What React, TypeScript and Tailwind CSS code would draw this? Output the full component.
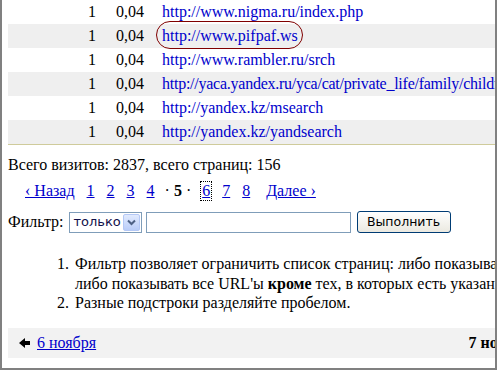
import React from "react";

const rows = [
  "http://www.nigma.ru/index.php",
  "http://www.pifpaf.ws",
  "http://www.rambler.ru/srch",
  "http://yaca.yandex.ru/yca/cat/private_life/family/children/kindergarten/",
  "http://yandex.kz/msearch",
  "http://yandex.kz/yandsearch",
];

const serif = { fontFamily: '"Liberation Serif", "Times New Roman", serif' };
const sans = { fontFamily: '"DejaVu Sans", Tahoma, sans-serif' };

export default function App() {
  return (
    <div
      className="w-[497px] h-[370px] overflow-hidden border-l-2 border-r-2 border-b-2 border-[#808080] bg-white text-[16px] text-black"
      style={serif}
    >
      <div className="w-[990px] pl-[6px] flex flex-col">
        {/* table */}
        <div className="flex flex-col border-b border-[#cfcb9b]">
          {rows.map((u, i) => (
            <div
              key={u}
              className={`flex items-center h-[24px] leading-[18px] whitespace-nowrap ${
                i % 2 === 1 ? "bg-[#efefef]" : "bg-white"
              }`}
            >
              <span className="w-[88px] text-right">1</span>
              <span className="ml-[20px] w-[28px]">0,04</span>
              <span className="ml-[18px] relative">
                <a
                  href="#"
                  className={`text-[#0000cc] ${i === 3 ? "tracking-[-0.25px]" : ""}`}
                >
                  {u}
                </a>
                {i === 1 && (
                  <span className="absolute left-[-6px] right-[-5px] top-[-6px] bottom-[-4px] rounded-full border-[1.5px] border-[#800000] pointer-events-none" />
                )}
              </span>
            </div>
          ))}
        </div>

        {/* stats */}
        <div className="mt-[11px] leading-[18px] whitespace-nowrap">
          Всего визитов: 2837, всего страниц: 156
        </div>

        {/* pagination */}
        <div className="mt-[8px] flex items-baseline leading-[18px] whitespace-nowrap">
          <a href="#" className="ml-[17px] text-[#0000cc] underline">
            ‹ Назад
          </a>
          <a href="#" className="ml-[12px] text-[#0000cc] underline">1</a>
          <a href="#" className="ml-[12px] text-[#0000cc] underline">2</a>
          <a href="#" className="ml-[12px] text-[#0000cc] underline">3</a>
          <a href="#" className="ml-[12px] text-[#0000cc] underline">4</a>
          <span className="ml-[10px]">
            ·&nbsp;<b>5</b>&nbsp;·
          </span>
          <a
            href="#"
            className="ml-[10px] px-[1px] text-[#0000cc] underline outline outline-1 outline-dotted outline-black"
          >
            6
          </a>
          <a href="#" className="ml-[11px] text-[#0000cc] underline">7</a>
          <a href="#" className="ml-[12px] text-[#0000cc] underline">8</a>
          <a href="#" className="ml-[16px] text-[#0000cc] underline">
            Далее ›
          </a>
        </div>

        {/* filter */}
        <div className="mt-[11px] flex items-center h-[22px] whitespace-nowrap">
          <span className="leading-[18px]">Фильтр:</span>
          <div className="ml-[5px] w-[73px] h-[21px] border border-[#7f9db9] bg-white flex items-center">
            <span className="pl-[4px] flex-1 text-[13px] text-[#10104a]" style={sans}>
              только
            </span>
            <span className="w-[17px] h-[17px] mr-[1px] rounded-[2px] border border-[#b4c8f6] bg-gradient-to-b from-[#e1eafe] to-[#b9cdf9] flex items-center justify-center">
              <svg width="9" height="7" viewBox="0 0 9 7">
                <path d="M1 1.5 L4.5 5 L8 1.5" stroke="#4d6185" strokeWidth="2" fill="none" />
              </svg>
            </span>
          </div>
          <div className="ml-[4px] w-[205px] h-[21px] border border-[#7f9db9] bg-white" />
          <button
            className="ml-[6px] w-[94px] h-[22px] rounded-[3px] border border-[#003c74] bg-gradient-to-b from-[#ffffff] to-[#ebe9e0] text-[12.5px] text-black flex items-center justify-center"
            style={sans}
          >
            Выполнить
          </button>
        </div>

        {/* list */}
        <ol className="mt-[21px] ml-[25px] pl-[40px] list-decimal leading-[19.5px] whitespace-nowrap">
          <li className="pl-[2px]">
            Фильтр позволяет ограничить список страниц: либо показывать только те URL'ы, в которых есть указанные подстроки,
            <br />
            либо показывать все URL'ы <b>кроме</b> тех, в которых есть указанные подстроки.
          </li>
          <li className="pl-[2px]">Разные подстроки разделяйте пробелом.</li>
        </ol>

        {/* footer */}
        <div className="mt-[15px] h-[30px] bg-[#f2f2f2] grid grid-cols-3 items-center whitespace-nowrap leading-[18px]">
          <div className="flex items-center pl-[11px]">
            <svg width="11" height="10" viewBox="0 0 11 10">
              <polygon points="0,5 6,0 6,3 11,3 11,7 6,7 6,10" fill="#000" />
            </svg>
            <a href="#" className="ml-[7px] text-[#0000cc] underline">
              6 ноября
            </a>
          </div>
          <div className="text-center font-bold">7 ноября</div>
          <div className="text-right pr-[11px]">
            <a href="#" className="text-[#0000cc] underline">8 ноября</a>
          </div>
        </div>
      </div>
    </div>
  );
}
